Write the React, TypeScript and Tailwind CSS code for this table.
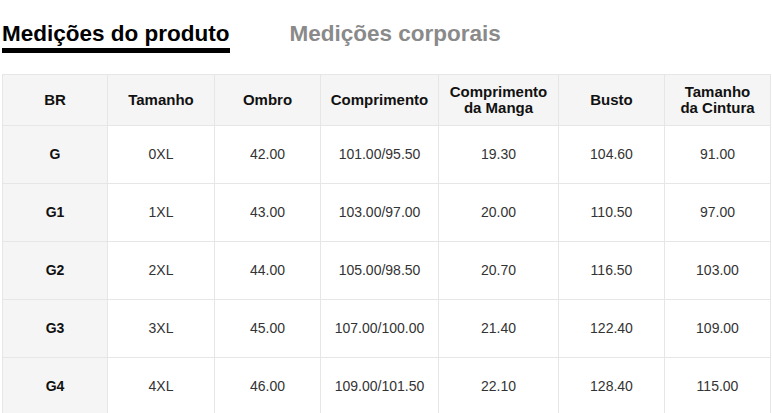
import React from "react";

const rows = [
  ["G", "0XL", "42.00", "101.00/95.50", "19.30", "104.60", "91.00"],
  ["G1", "1XL", "43.00", "103.00/97.00", "20.00", "110.50", "97.00"],
  ["G2", "2XL", "44.00", "105.00/98.50", "20.70", "116.50", "103.00"],
  ["G3", "3XL", "45.00", "107.00/100.00", "21.40", "122.40", "109.00"],
  ["G4", "4XL", "46.00", "109.00/101.50", "22.10", "128.40", "115.00"],
];

const widths = [105, 107, 106, 118, 120, 106, 106];

export default function App() {
  return (
    <div className="w-[772px] h-[413px] overflow-hidden bg-white font-['Liberation_Sans',Arial,sans-serif] text-[#222]">
      <div className="flex items-start gap-[60px] pl-[2px] pt-[21px]">
        <div className="flex flex-col">
          <span className="text-[22.5px] font-bold leading-[26px] text-black">Medições do produto</span>
          <div className="mt-[1px] h-[5px] bg-black" />
        </div>
        <span className="text-[22.5px] font-bold leading-[26px] text-[#8a8a8a]">Medições corporais</span>
      </div>
      <table className="ml-[2px] mt-[21px] table-fixed border-collapse w-[768px]">
        <colgroup>
          {widths.map((w, i) => (
            <col key={i} style={{ width: w }} />
          ))}
        </colgroup>
        <thead>
          <tr className="h-[51px] bg-[#f5f5f5]">
            {["BR", "Tamanho", "Ombro", "Comprimento", "Comprimento da Manga", "Busto", "Tamanho da Cintura"].map((h, i) => (
              <th key={i} className="border border-[#e6e6e6] px-[2px] text-center text-[15px] font-bold leading-[16px] text-[#111]">
                {h === "Comprimento da Manga" ? (
                  <>Comprimento<br />da Manga</>
                ) : h === "Tamanho da Cintura" ? (
                  <>Tamanho<br />da Cintura</>
                ) : (
                  h
                )}
              </th>
            ))}
          </tr>
        </thead>
        <tbody>
          {rows.map((r, ri) => (
            <tr key={ri} className="h-[58px]">
              {r.map((c, ci) => (
                <td
                  key={ci}
                  className={
                    ci === 0
                      ? "border border-[#e6e6e6] bg-[#f5f5f5] text-center text-[14px] font-bold text-[#111]"
                      : "border border-[#e6e6e6] text-center text-[14px] text-[#333]"
                  }
                >
                  {c}
                </td>
              ))}
            </tr>
          ))}
        </tbody>
      </table>
    </div>
  );
}
